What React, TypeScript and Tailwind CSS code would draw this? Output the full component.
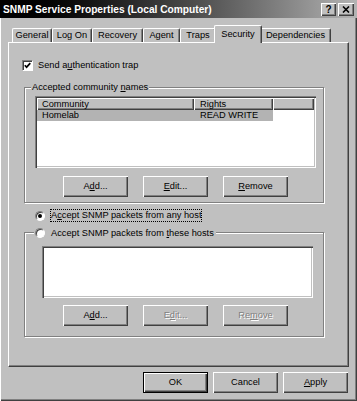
import type { ReactNode } from "react";

const raised = "shadow-[inset_1px_1px_0_#ffffff,inset_-1px_-1px_0_#404040,inset_-2px_-2px_0_#808080]";
const sunken = "shadow-[inset_1px_1px_0_#808080,inset_2px_2px_0_#404040,inset_-1px_-1px_0_#ffffff,inset_-2px_-2px_0_#c0c0c0]";
const etched = "border border-[#808080] shadow-[inset_1px_1px_0_#ffffff,1px_1px_0_#ffffff]";

function Btn({ children, disabled = false, primary = false }: { children: ReactNode; disabled?: boolean; primary?: boolean }) {
  return (
    <div
      className={`flex h-[21px] w-[65px] items-center justify-center ${raised} ${
        primary ? "border border-black" : ""
      } ${disabled ? "text-[#808080] [text-shadow:1px_1px_0_#ffffff]" : "text-black"}`}
    >
      {children}
    </div>
  );
}

function Radio({ checked = false }: { checked?: boolean }) {
  return (
    <span className="relative flex h-[10px] w-[10px] shrink-0 items-center justify-center rounded-full border border-t-[#808080] border-l-[#808080] border-r-white border-b-white bg-white shadow-[inset_1px_1px_0_#404040]">
      {checked && <span className="h-[4px] w-[4px] rounded-full bg-black" />}
    </span>
  );
}

const tabs = [
  { label: "General", w: "w-[40px]" },
  { label: "Log On", w: "w-[40px]" },
  { label: "Recovery", w: "w-[51px]" },
  { label: "Agent", w: "w-[37px]" },
  { label: "Traps", w: "w-[36px]" },
  { label: "Security", w: "w-[48px]", selected: true },
  { label: "Dependencies", w: "w-[71px]" },
];

export default function App() {
  return (
    <div className="flex h-[401px] w-[357px] flex-col overflow-hidden bg-[#c0c0c0] font-['Liberation_Sans',Arial,sans-serif] text-[9.25px] leading-[11px] text-black shadow-[inset_1px_0_0_#ffffff,inset_-1px_-1px_0_#404040,inset_-2px_-2px_0_#808080]">
      {/* title bar */}
      <div className="flex h-[18px] shrink-0 items-center bg-linear-to-r from-[#000000] to-[#b4b4b4] pl-[3px] pr-[3px]">
        <span className="text-[10.2px] font-bold text-white">SNMP Service Properties (Local Computer)</span>
        <div className="ml-auto flex gap-[2px]">
          <div className={`flex h-[13px] w-[15px] items-center justify-center bg-[#c0c0c0] text-[10px] font-bold ${raised}`}>?</div>
          <div className={`flex h-[13px] w-[16px] items-center justify-center bg-[#c0c0c0] ${raised}`}>
            <svg width="8" height="7" viewBox="0 0 8 7">
              <path d="M1 0.5 L7 6.5 M7 0.5 L1 6.5" stroke="#000" strokeWidth="1.6" />
            </svg>
          </div>
        </div>
      </div>

      {/* tabs */}
      <div className="mt-[7px] flex h-[17px] shrink-0 items-end pl-[12px]">
        {tabs.map((t) =>
          t.selected ? (
            <div
              key={t.label}
              className={`relative z-10 -mx-[2px] -mb-[1px] flex h-[18px] items-center justify-center rounded-t-[2px] border-l border-t border-r border-l-white border-t-white border-r-[#404040] bg-[#c0c0c0] pb-[1px] shadow-[inset_-1px_0_0_#808080] ${t.w}`}
            >
              {t.label}
            </div>
          ) : (
            <div
              key={t.label}
              className={`flex h-[14px] items-center justify-center rounded-t-[2px] border-l border-t border-r border-l-white border-t-white border-r-[#404040] shadow-[inset_-1px_0_0_#808080] ${t.w}`}
            >
              {t.label}
            </div>
          )
        )}
      </div>

      {/* tab panel */}
      <div className="ml-[8px] flex h-[325px] w-[341px] shrink-0 flex-col border border-t-white border-l-white border-r-[#404040] border-b-[#404040] shadow-[inset_-1px_-1px_0_#808080]">
        <div className="mt-[17px] flex h-[11px] items-center pl-[13px]">
          <span className="flex h-[11px] w-[11px] items-center justify-center border border-t-[#808080] border-l-[#808080] border-r-white border-b-white bg-white shadow-[inset_1px_1px_0_#404040]">
            <svg width="7" height="7" viewBox="0 0 7 7">
              <path d="M0.8 3.2 L2.6 5.2 L6.3 1.2" fill="none" stroke="#000" strokeWidth="1.7" />
            </svg>
          </span>
          <span className="ml-[5px]">
            Send a<u>u</u>thentication trap
          </span>
        </div>

        {/* accepted community names */}
        <div className={`relative ml-[15px] mt-[16px] flex h-[116px] w-[300px] flex-col ${etched}`}>
          <span className="absolute -top-[6px] left-[6px] bg-[#c0c0c0] px-[1px]">
            Accepted community <u>n</u>ames
          </span>
          <div className={`ml-[10px] mt-[8px] flex h-[72px] w-[281px] flex-col bg-white p-[2px] ${sunken}`}>
            <div className="flex h-[12px] bg-[#c0c0c0]">
              <div className={`flex w-[157px] items-center pl-[5px] ${raised}`}>Community</div>
              <div className={`flex w-[79px] items-center pl-[6px] ${raised}`}>Rights</div>
              <div className={`flex-1 ${raised}`} />
            </div>
            <div className="flex h-[11px] w-[236px] items-center bg-[#b3b3b3]">
              <span className="w-[157px] pl-[5px]">Homelab</span>
              <span className="w-[79px] pl-[6px]">READ WRITE</span>
            </div>
          </div>
          <div className="mt-[8px] flex gap-[15px] pl-[38px]">
            <Btn>
              A<u>d</u>d...
            </Btn>
            <Btn>
              <u>E</u>dit...
            </Btn>
            <Btn>
              <u>R</u>emove
            </Btn>
          </div>
        </div>

        {/* any host */}
        <div className="mt-[6px] flex h-[13px] items-center pl-[26px]">
          <Radio checked />
          <span className="ml-[5px] border border-dotted border-black px-[0px] leading-[11px]">
            A<u>c</u>cept SNMP packets from any host
          </span>
        </div>

        {/* these hosts */}
        <div className={`relative ml-[15px] mt-[10px] flex h-[105px] w-[300px] flex-col ${etched}`}>
          <div className="absolute -top-[6px] left-[9px] flex h-[12px] items-center bg-[#c0c0c0] px-[1px]">
            <Radio />
            <span className="ml-[6px] pr-[1px]">
              Accept SNMP packets from <u>t</u>hese hosts
            </span>
          </div>
          <div className={`ml-[17px] mt-[13px] h-[52px] w-[271px] bg-white ${sunken}`} />
          <div className="mt-[7px] flex gap-[15px] pl-[38px]">
            <Btn>
              A<u>d</u>d...
            </Btn>
            <Btn disabled>
              E<u>d</u>it...
            </Btn>
            <Btn disabled>
              Re<u>m</u>ove
            </Btn>
          </div>
        </div>
      </div>

      {/* dialog buttons */}
      <div className="mt-[5px] flex justify-end gap-[5px] pr-[9px]">
        <Btn primary>OK</Btn>
        <Btn>Cancel</Btn>
        <Btn>
          <u>A</u>pply
        </Btn>
      </div>
    </div>
  );
}
